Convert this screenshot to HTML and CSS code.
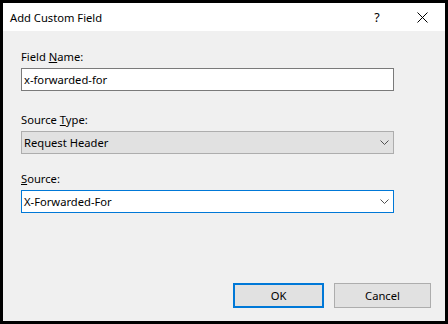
FILE: index.html
```html
<!DOCTYPE html>
<html lang="en">
<head>
    <meta charset="UTF-8">
    <title>Add Custom Field</title>
    <link rel="stylesheet" href="styles.css">
</head>
<body>
<div class="dialog">
    <div class="title-bar">
        <span class="title">Add Custom Field</span>
        <span class="help">?</span>
        <span class="close">
            <svg width="11" height="11" viewBox="0 0 11 11">
                <path d="M0.5 0.5 L10.5 10.5 M10.5 0.5 L0.5 10.5" stroke="#000" stroke-width="1" fill="none"/>
            </svg>
        </span>
    </div>
    <div class="content">
        <div class="field">
            <label>Field <u>N</u>ame:</label>
            <div class="textbox">x-forwarded-for</div>
        </div>
        <div class="field field-type">
            <label>Source <u>T</u>ype:</label>
            <div class="combo combo-disabled">
                <span>Request Header</span>
                <svg class="chevron" width="9" height="5" viewBox="0 0 9 5">
                    <path d="M0.5 0.5 L4.5 4.5 L8.5 0.5" stroke="#505050" stroke-width="1" fill="none"/>
                </svg>
            </div>
        </div>
        <div class="field field-source">
            <label><u>S</u>ource:</label>
            <div class="combo combo-focused">
                <span>X-Forwarded-For</span>
                <svg class="chevron" width="9" height="5" viewBox="0 0 9 5">
                    <path d="M0.5 0.5 L4.5 4.5 L8.5 0.5" stroke="#505050" stroke-width="1" fill="none"/>
                </svg>
            </div>
        </div>
        <div class="buttons">
            <button class="btn btn-default">OK</button>
            <button class="btn btn-cancel">Cancel</button>
        </div>
    </div>
</div>
</body>
</html>
```

FILE: styles.css
```css
body {
    margin: 0;
    font-family: "Noto Sans", "Open Sans", sans-serif;
    font-size: 11.2px;
    color: #000;
}

.dialog {
    width: 448px;
    height: 324px;
    box-sizing: border-box;
    border: 3px solid #000;
    background-color: #f0f0f0;
    display: flex;
    flex-direction: column;
}

.title-bar {
    height: 28px;
    background-color: #fff;
    display: flex;
    align-items: center;
    padding-left: 7px;
}

.title {
    flex: 1;
}

.help {
    width: 12px;
    text-align: center;
    margin-right: 34px;
    font-size: 12.5px;
}

.close {
    display: flex;
    margin-right: 17px;
}

.content {
    flex: 1;
    padding: 18px 0 0 18px;
    display: flex;
    flex-direction: column;
}

.field {
    display: flex;
    flex-direction: column;
    width: 373px;
}

.field label {
    line-height: 15px;
    margin-bottom: 4px;
}

.field-type {
    margin-top: 21px;
}

.field-source {
    margin-top: 17px;
}

.textbox,
.combo {
    height: 23px;
    box-sizing: border-box;
    border: 1px solid #7a7a7a;
    background-color: #fff;
    padding: 0 2px;
    line-height: 21px;
}

.combo {
    display: flex;
    align-items: center;
    justify-content: space-between;
    padding-right: 4px;
}

.combo-disabled {
    background-color: #e1e1e1;
    border-color: #adadad;
}

.combo-focused {
    border-color: #0078d7;
}

.buttons {
    display: flex;
    margin-top: auto;
    margin-bottom: 13px;
    margin-left: 212px;
    gap: 10px;
}

.btn {
    height: 25px;
    box-sizing: border-box;
    font-family: inherit;
    font-size: 11.2px;
    background-color: #e1e1e1;
    border: 1px solid #adadad;
    padding: 0;
    color: #000;
}

.btn-default {
    width: 91px;
    border: 2px solid #0078d7;
}

.btn-cancel {
    width: 97px;
}
```
